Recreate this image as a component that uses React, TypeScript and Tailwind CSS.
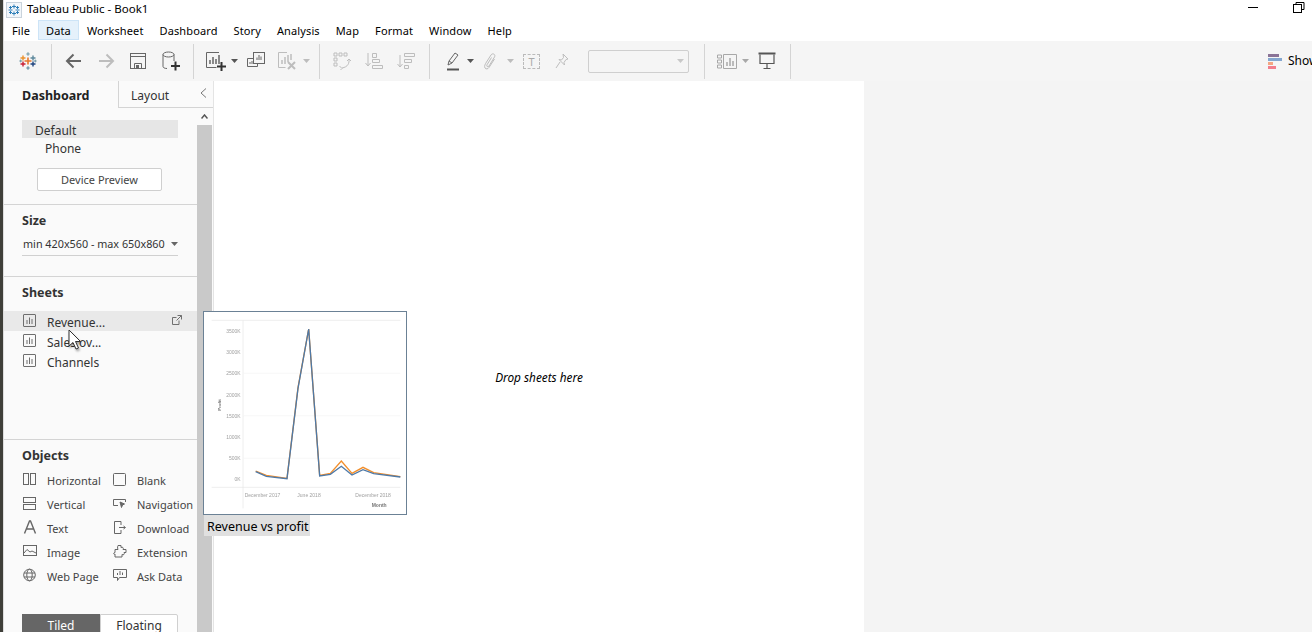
import type { ReactNode } from 'react'

const menus = ['File', 'Data', 'Worksheet', 'Dashboard', 'Story', 'Analysis', 'Map', 'Format', 'Window', 'Help']

function Caret({ className = '' }: { className?: string }) {
  return (
    <svg width="7" height="4" viewBox="0 0 7 4" className={`shrink-0 ${className}`}>
      <path d="M0 0h7L3.5 4z" fill="currentColor" />
    </svg>
  )
}

function Icon({ className = '', w = 20, h = 20, children }: { className?: string; w?: number; h?: number; children: ReactNode }) {
  return (
    <svg width={w} height={h} viewBox={`0 0 ${w} ${h}`} fill="none" stroke="currentColor" strokeWidth="1" className={`shrink-0 ${className}`}>
      {children}
    </svg>
  )
}

function Sep({ className = '' }: { className?: string }) {
  return <div className={`w-px h-[35px] bg-[#d4d4d4] shrink-0 ${className}`} />
}

function TableauLogo() {
  const cross = (x: number, y: number, s: number, c: string, sw = 1.4) => (
    <path d={`M${x - s} ${y}H${x + s}M${x} ${y - s}V${y + s}`} stroke={c} strokeWidth={sw} />
  )
  return (
    <svg width="18" height="18" viewBox="0 0 18 18" fill="none" className="shrink-0">
      {cross(9, 9, 3.5, '#e8762b', 1.6)}
      {cross(4, 6, 2.5, '#eb912b')}
      {cross(14, 6, 2.5, '#5b879b')}
      {cross(4, 12, 2.5, '#c72035')}
      {cross(14, 12, 2.5, '#1f447e')}
      {cross(9, 2, 1.7, '#7099a6', 1.1)}
      {cross(9, 16, 1.7, '#59879b', 1.1)}
      {cross(1.7, 9, 1.4, '#7099a6', 1)}
      {cross(16.3, 9, 1.4, '#7099a6', 1)}
    </svg>
  )
}

function WindowLogo() {
  return (
    <svg width="16" height="16" viewBox="0 0 16 16" fill="none" className="shrink-0">
      <rect x="0.5" y="0.5" width="15" height="15" fill="#f2f6fa" stroke="#c9d3dc" />
      <path d="M8 2.500v4M6 4.500h4M8 9.500v4M6 11.500h4M2.500 8h4M9.500 8h4M4.500 4v3M3 5.500h3M11.500 4v3M10 5.500h3M4.500 9v3M3 10.500h3M11.500 9v3M10 10.500h3" stroke="#2e7fb8" strokeWidth="1" />
    </svg>
  )
}

function SheetIcon() {
  return (
    <Icon w={13} h={13} className="text-[#6e6e6e]">
      <rect x="0.5" y="0.500" width="12" height="12" rx="0.500" />
      <path d="M4 6v4M6.500 3.500V10M9 5v5" />
    </Icon>
  )
}

function SheetRow({ label, active }: { label: string; active?: boolean }) {
  return (
    <div className={`flex items-center h-5 pl-[19px] relative ${active ? 'bg-[#e9e9e9]' : ''}`}>
      <span className="-mt-[1px]"><SheetIcon /></span>
      <span className="ml-[11px] pt-[3px] text-[#333333]">{label}</span>
      {active && (
        <Icon w={10} h={10} className="absolute right-[15px] top-[4px] text-[#707070]">
          <path d="M7 5.500v4H.500v-7h4M5.500.500h4v4M9.500.500L4.500 5.500" />
        </Icon>
      )}
    </div>
  )
}

const objectIcons: Record<string, ReactNode> = {
  Horizontal: <><rect x=".5" y="1.500" width="5" height="11" /><rect x="7.500" y="1.500" width="5" height="11" /></>,
  Vertical: <><rect x=".5" y="1.500" width="12" height="5" /><rect x=".5" y="8.500" width="12" height="5" /></>,
  Text: <path d="M1.500 13.500L6.500 1h1l5 12.500M3.500 9h7" strokeWidth="1.400" />,
  Image: <><rect x=".5" y="1.500" width="13" height="10" /><path d="M1 9l3-3.500 3 2.500 2-1 4 2" /></>,
  'Web Page': <><circle cx="6.500" cy="7" r="5.800" /><ellipse cx="6.500" cy="7" rx="2.700" ry="5.800" /><path d="M1 5h11M1 9h11" /></>,
  Blank: <rect x=".5" y="1.500" width="12" height="12" rx="1" />,
  Navigation: <><path d="M5 9.500H.5v-6h12V6" /><path d="M7 6l4.500 2-2 1L8.500 11.500z" fill="currentColor" /></>,
  Download: <><path d="M8 5V1.500H1.500v12H8V10" /><path d="M6 7.500h6M10.500 6l2 1.500-2 1.500" /></>,
  Extension: <path d="M5 1.500h3v2c1.500-1 3 .5 2 2h3v3h-2c1 1.500-.5 3-2 2v2.500H2v-3C.5 11 0 8.500 2 8.500V5.500h3c-1-2 0-4 0-4z" />,
  'Ask Data': <><path d="M.5 1.500h13v8H6.500l-2 3v-3h-4z" /><path d="M4.500 7V5M7 7V3M9.500 7V4.500" /></>,
}

function ObjectItem({ label }: { label: string }) {
  return (
    <div className="flex items-center h-6">
      <span className="w-[24px] shrink-0 text-[#666666] -mt-[3px]"><Icon w={14} h={15}>{objectIcons[label]}</Icon></span>
      <span className="text-[11px] text-[#444444] whitespace-nowrap">{label}</span>
    </div>
  )
}

function DragThumb() {
  const blue = '168,500 200,514 262,521 295,250 327,72 360,513 392,508 425,484 457,510 490,494 522,506 602,516'
  const orange = '168,498 200,511 262,520 295,248 327,72 360,511 392,505 425,468 457,505 490,487 522,503 602,515'
  const ticks = ['3500K', '3000K', '2500K', '2000K', '1500K', '1000K', '500K', '0K']
  return (
    <div className="absolute left-[199px] top-[230px] w-[204px]">
      <div className="w-[204px] h-[204px] bg-white border border-[#6b8195]">
        <svg width="202" height="202" viewBox="13 21 606 606" fill="none" className="blur-[0.3px]">
          <path d="M36 46H602M130 46V610M36 547H602" stroke="#e6e6e6" strokeWidth="2" />
          <path d="M130 205H602M130 332H602M130 460H602" stroke="#f5f5f5" strokeWidth="2" />
          <polyline points={orange} stroke="#f28e2b" strokeWidth="4" />
          <polyline points={blue} stroke="#4e79a7" strokeWidth="4" />
          {ticks.map((t, i) => (
            <text key={t} x="123" y={84 + i * 63.600} textAnchor="end" fontSize="15" fill="#a0a0a0" fontFamily="'Liberation Sans', sans-serif">{t}</text>
          ))}
          <text x="135" y="575" fontSize="15" fill="#a0a0a0" fontFamily="'Liberation Sans', sans-serif">December 2017</text>
          <text x="293" y="575" fontSize="15" fill="#a0a0a0" fontFamily="'Liberation Sans', sans-serif">June 2018</text>
          <text x="467" y="575" fontSize="15" fill="#a0a0a0" fontFamily="'Liberation Sans', sans-serif">December 2018</text>
          <text x="516" y="605" fontSize="15" fontWeight="700" fill="#777777" fontFamily="'Liberation Sans', sans-serif">Month</text>
          <text x="0" y="0" fontSize="13" fontWeight="700" fill="#777777" fontFamily="'Liberation Sans', sans-serif" transform="translate(63 317) rotate(-90)">Profit</text>
        </svg>
      </div>
      <div className="ml-px w-[106px] h-[21px] bg-[#e0e0e0] pl-[3px] text-[12.500px] leading-[23px] text-black whitespace-nowrap">Revenue vs profit</div>
    </div>
  )
}

function Cursor() {
  return (
    <svg width="16" height="24" viewBox="0 0 16 24" className="absolute left-[64px] top-[248px] drop-shadow-[1px_2px_1px_rgba(0,0,0,0.35)]">
      <path d="M1 1v16l4-3.500 3 6.500 2.500-1-3-6.500h5z" fill="#ffffff" stroke="#333333" />
    </svg>
  )
}

export default function App() {
  return (
    <div className="flex w-[1312px] h-[632px] overflow-hidden bg-white text-[12px] text-[#333333] font-['Noto_Sans','Open_Sans',sans-serif]">
      <div className="w-[4px] shrink-0 bg-[#3f3f39] border-r border-[#ddd]" />
      <div className="flex-1 min-w-0 flex flex-col relative">
        {/* Title bar */}
        <div className="h-5 flex items-center pl-[2px] shrink-0">
          <WindowLogo />
          <span className="ml-[5px] -mt-[3px] text-black text-[11.500px]">Tableau Public - Book1</span>
          <div className="ml-auto flex items-center pr-[7px] -mt-[5px]">
            <div className="w-[10px] h-px bg-black" />
            <Icon w={12} h={11} className="ml-[35px] text-black">
              <rect x=".5" y="2.500" width="8" height="8" />
              <path d="M3 2.500V.500h8v7H8.500" />
            </Icon>
          </div>
        </div>

        {/* Menu */}
        <div className="h-[20px] flex shrink-0 text-black text-[11px] tracking-[0.12px]">
          {menus.map((m, i) => (
            <div key={m} className={`h-5 px-[7px] leading-[20px] border ${i === 1 ? 'bg-[#e5f1fb] border-[#cde4f7]' : 'border-transparent'}`}>
              {m}
            </div>
          ))}
        </div>

        {/* Toolbar */}
        <div className="h-[40px] mt-px bg-[#f5f5f5] flex items-center shrink-0 text-[#666666]">
          <span className="ml-[15px]"><TableauLogo /></span>
          <Sep className="ml-[14px]" />
          <Icon className="ml-[12px]">
            <path d="M17 10H3M9.500 3.500L3 10l6.500 6.500" strokeWidth="2" />
          </Icon>
          <Icon className="ml-[12px] text-[#bdbdbd]">
            <path d="M3 10H17M10.500 3.500L17 10l-6.500 6.500" strokeWidth="2" />
          </Icon>
          <Icon className="ml-[14px]" w={16} h={16}>
            <rect x=".5" y=".5" width="15" height="15" />
            <path d="M.5 3.500H15.500M4.500 15.500v-5h7v5" />
            <rect x="6" y="12" width="3" height="3" fill="currentColor" stroke="none" />
          </Icon>
          <Icon className="ml-[15px]" w={20} h={20}>
            <ellipse cx="7.500" cy="3.500" rx="5.500" ry="2.500" />
            <path d="M2 3.500v12c0 1 1.500 2 4 2M13 3.500V10" />
            <path d="M10 15h9M14.500 10.500v9" stroke="#333" strokeWidth="2" />
          </Icon>
          <Sep className="ml-[12px]" />
          <Icon className="ml-[11px]" w={22} h={20}>
            <path d="M14 1.500H1.500v15h10" />
            <path d="M5 13V9M8 13V6M11 13V8M14 13V4" strokeWidth="1.500" />
            <path d="M12 15.500h9M16.500 11v9" stroke="#333" strokeWidth="2" />
          </Icon>
          <Caret className="ml-[4px] text-[#555555]" />
          <Icon className="ml-[9px]" w={18} h={18}>
            <rect x="6.500" y=".5" width="11" height="11" />
            <path d="M6 6.500H.5v8h10V12" />
            <path d="M10 8V5.500M12 8V3M14 8V4.500M3 12v-2M5 12v-3M7 12v-1" />
          </Icon>
          <Icon className="ml-[12px] text-[#bdbdbd]" w={20} h={20}>
            <path d="M10 1.500H1.500v15h7" />
            <path d="M5 13V9M8 13V6M11 11V4M14 9V3" strokeWidth="1.500" />
            <path d="M11 11l7 7M18 11l-7 7" strokeWidth="2" />
          </Icon>
          <Caret className="ml-[6px] text-[#bdbdbd]" />
          <Sep className="ml-[9px]" />
          <div className="flex items-center text-[#bdbdbd]">
            <Icon className="ml-[13px]" w={18} h={18}>
              <path d="M1 1h3v3H1zM6 1h3v3H6zM11 1h3v3h-3zM1 6h3v3H1zM1 11h3v3H1z" />
              <path d="M16 7c.5 4-1 8-7 9M6.500 14L9 16.500 7 18.500M14 9l2-2 2 2" />
            </Icon>
            <Icon className="ml-[14px]" w={18} h={18}>
              <path d="M3 1v12M.5 11L3 14l2.500-3M7.500 1.500h4v4h-4zM7.500 7.500h7v3h-7zM7.500 13.500h10v3h-10z" />
            </Icon>
            <Icon className="ml-[14px]" w={18} h={18}>
              <path d="M3 3v12M.5 12L3 15l2.500-3M7.500 1.500h10v3h-10zM7.500 7.500h7v3h-7zM7.500 13.500h4v3h-4z" />
            </Icon>
          </div>
          <Sep className="ml-[14px]" />
          <Icon className="ml-[16px]" w={14} h={20}>
            <path d="M2 14l1-4 6-8 3 2-6 8zM3 10l3 2" />
            <path d="M1 18.500h12" strokeWidth="2" stroke="#555" />
          </Icon>
          <Caret className="ml-[7px] text-[#555555]" />
          <Icon className="ml-[9px] text-[#bdbdbd]" w={14} h={18}>
            <path d="M3.500 10L8 3c1.500-2.500 5-.5 3.500 2L6 14c-1 1.500-3 .5-2-1.200L8.500 5.500" />
            <path d="M3.500 10C2 12.500 1 14 2 16c1 1.500 3 1 4-.5l5.500-8.500" />
          </Icon>
          <Caret className="ml-[10px] text-[#bdbdbd]" />
          <div className="ml-[9px] w-[17px] h-[15px] border border-dashed border-[#bbbbbb] flex items-center justify-center text-[#aaaaaa] text-[11px] leading-none shrink-0">T</div>
          <Icon className="ml-[15px] text-[#bdbdbd]" w={14} h={16}>
            <path d="M8 1l5 5-2 .500-2 3 .500 2.500L4 6.500l2.500.500 2-2.500zM5 9l-4 6" />
          </Icon>
          <div className="ml-[19px] w-[101px] h-[23px] rounded-[2px] border border-[#cfcfcf] flex items-center justify-end pr-[4px] shrink-0">
            <Caret className="text-[#c8c8c8]" />
          </div>
          <Sep className="ml-[15px]" />
          <Icon className="ml-[12px] text-[#a8a8a8]" w={21} h={15}>
            <path d="M.5 1h4v3h-4zM.5 6h4v3h-4zM.5 11h4v3h-4zM6.500.5h13v14h-13z" />
            <path d="M10 12V8M13 12V4M16 12V7" strokeWidth="1.500" />
          </Icon>
          <Caret className="ml-[4px] text-[#a8a8a8]" />
          <Icon className="ml-[9px] text-[#555555]" w={18} h={18}>
            <path d="M.5 1.500h17" strokeWidth="2" />
            <path d="M2 2.500V11.500H16V2.500M9 11.500v4.500M5.500 16.500h7" strokeWidth="1.200" />
          </Icon>
          <Sep className="ml-[14px]" />
          <div className="ml-auto flex items-center shrink-0 w-[44px] gap-[6px]">
            <svg width="14" height="15" viewBox="0 0 14 15" className="shrink-0">
              <rect x="0" y="0" width="11" height="3" fill="#8a7396" />
              <rect x="0" y="4" width="14" height="3" fill="#85a7cf" />
              <rect x="0" y="8" width="5" height="3" fill="#f4a582" />
              <rect x="0" y="12" width="8" height="3" fill="#f27e8c" />
            </svg>
            <span className="text-black whitespace-nowrap">Show Me</span>
          </div>
        </div>

        {/* Main */}
        <div className="flex-1 min-h-0 flex relative">
          {/* Side panel */}
          <div className="w-[209px] shrink-0 flex flex-col bg-[#fafafa]">
            <div className="h-[27px] flex shrink-0">
              <div className="w-[114px] pl-[18px] pt-[6px] text-[12.500px] font-bold text-[#222222]">Dashboard</div>
              <div className="flex-1 border-l border-b border-[#d4d4d4] flex items-center pl-[12px] pt-[4px] relative">
                <span className="text-[12px]">Layout</span>
                <svg width="7" height="10" viewBox="0 0 7 10" fill="none" className="absolute right-[6px] top-[7px] text-[#777777]">
                  <path d="M6 .5L1 5l5 4.500" stroke="currentColor" />
                </svg>
              </div>
            </div>
            <div className="flex-1 min-h-0 flex">
              <div className="w-[193px] shrink-0 overflow-hidden">
                <div className="h-[97px] border-b border-[#d4d4d4] pt-[12px] px-[18px]">
                  <div className="h-[18px] w-[156px] bg-[#e6e6e6] pl-[13px] leading-[22px]">Default</div>
                  <div className="pl-[23px] h-[20px] leading-[21px]">Phone</div>
                  <div className="ml-[15px] mt-[10px] w-[125px] h-[23px] pt-px border border-[#cfcfcf] rounded-[2px] bg-white text-[11px] flex items-center justify-center text-[#444444]">Device Preview</div>
                </div>
                <div className="h-[72px] border-b border-[#d4d4d4] px-[18px] pt-[7px]">
                  <div className="text-[12.500px] font-bold text-[#333333]">Size</div>
                  <div className="mt-[3px] w-[156px] h-[22px] border-b border-[#d0d0d0] flex items-center justify-between text-[10.800px] whitespace-nowrap">
                    <span className="pl-px">min 420x560 - max 650x860</span>
                    <Caret className="text-[#666666]" />
                  </div>
                </div>
                <div className="h-[163px] border-b border-[#d4d4d4] pt-[6px]">
                  <div className="pl-[18px] pt-px text-[12.500px] font-bold h-[28px]">Sheets</div>
                  <SheetRow label="Revenue..." active />
                  <SheetRow label="Sales ov..." />
                  <SheetRow label="Channels" />
                </div>
                <div className="px-[18px] pt-[7px]">
                  <div className="text-[12.500px] font-bold h-[22px]">Objects</div>
                  <div className="ml-px grid grid-cols-[90px_1fr]">
                    <ObjectItem label="Horizontal" />
                    <ObjectItem label="Blank" />
                    <ObjectItem label="Vertical" />
                    <ObjectItem label="Navigation" />
                    <ObjectItem label="Text" />
                    <ObjectItem label="Download" />
                    <ObjectItem label="Image" />
                    <ObjectItem label="Extension" />
                    <ObjectItem label="Web Page" />
                    <ObjectItem label="Ask Data" />
                  </div>
                  <div className="mt-[25px] flex w-[156px] h-[24px] text-[12px]">
                    <div className="w-[78px] bg-[#666666] text-white text-center leading-[24px]">Tiled</div>
                    <div className="w-[78px] bg-white border border-[#d0d0d0] text-center leading-[22px] rounded-tr-[2px]">Floating</div>
                  </div>
                </div>
              </div>
              <div className="w-[15px] shrink-0 flex flex-col">
                <div className="h-[17px] flex items-center justify-center text-[#555555]">
                  <svg width="7" height="5" viewBox="0 0 7 5" fill="none"><path d="M.5 4.500L3.500 1l3 3.500" stroke="currentColor" strokeWidth="1.500" /></svg>
                </div>
                <div className="flex-1 bg-[#c9c9c9]" />
              </div>
            </div>
          </div>
          <div className="w-px bg-[#e4e4e4] shrink-0" />

          {/* Canvas */}
          <div className="w-[650px] shrink-0 bg-white flex justify-center pt-[288px]">
            <span className="italic text-black text-[11.800px]">Drop sheets here</span>
          </div>
          <div className="flex-1 bg-[#f4f4f4]" />

          <DragThumb />
          <Cursor />
        </div>
      </div>
    </div>
  )
}
